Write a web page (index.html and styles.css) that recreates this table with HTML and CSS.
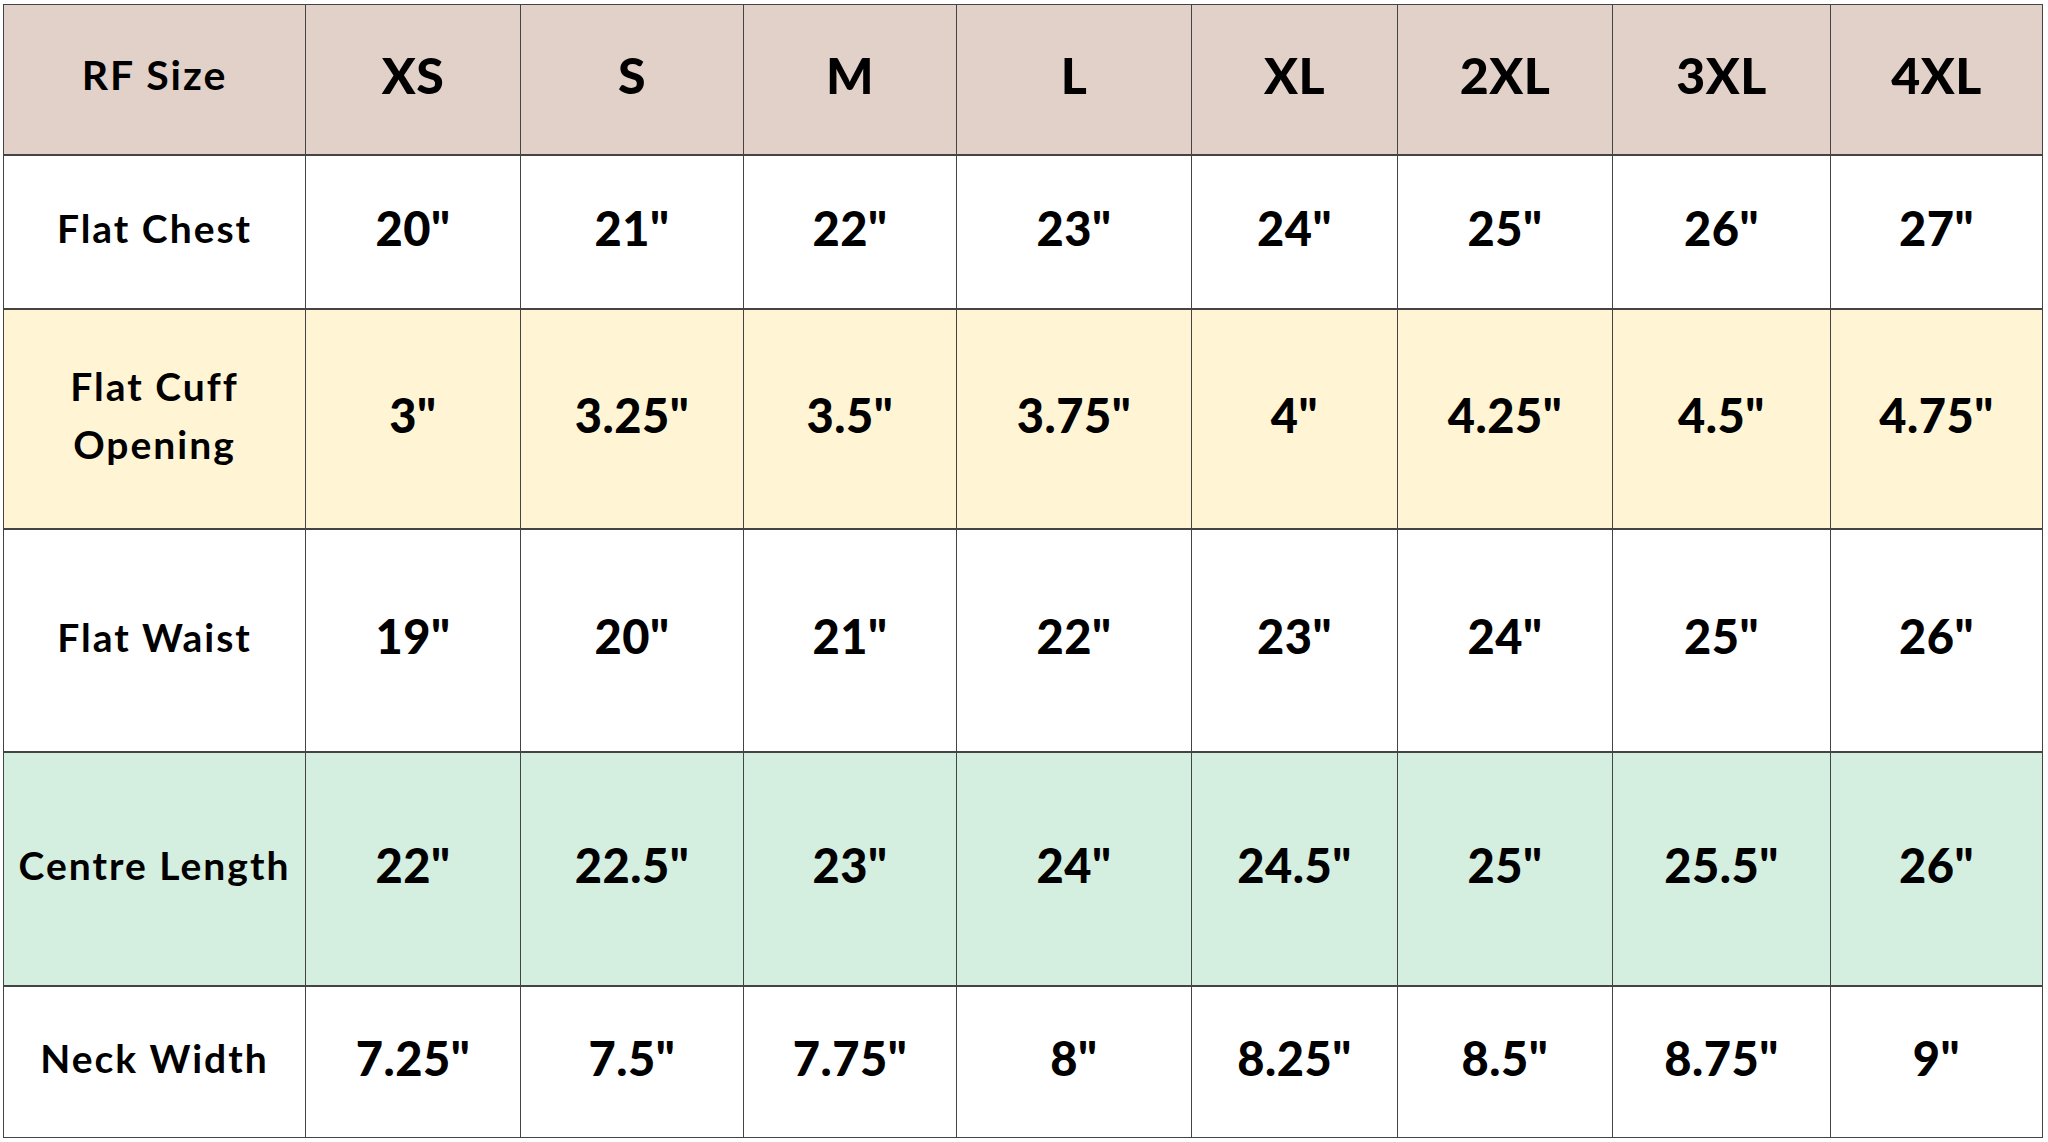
FILE: index.html
```html
<!DOCTYPE html>
<html lang="en">
<head>
<meta charset="utf-8">
<title>RF Size Chart</title>
<link rel="stylesheet" href="styles.css">
</head>
<body>
<div class="chart">
  <div class="cell head label">RF Size</div>
  <div class="cell head">XS</div>
  <div class="cell head">S</div>
  <div class="cell head">M</div>
  <div class="cell head">L</div>
  <div class="cell head">XL</div>
  <div class="cell head">2XL</div>
  <div class="cell head">3XL</div>
  <div class="cell head">4XL</div>

  <div class="cell white label">Flat Chest</div>
  <div class="cell white">20"</div>
  <div class="cell white">21"</div>
  <div class="cell white">22"</div>
  <div class="cell white">23"</div>
  <div class="cell white">24"</div>
  <div class="cell white">25"</div>
  <div class="cell white">26"</div>
  <div class="cell white">27"</div>

  <div class="cell yellow label">Flat Cuff<br>Opening</div>
  <div class="cell yellow">3"</div>
  <div class="cell yellow">3.25"</div>
  <div class="cell yellow">3.5"</div>
  <div class="cell yellow">3.75"</div>
  <div class="cell yellow">4"</div>
  <div class="cell yellow">4.25"</div>
  <div class="cell yellow">4.5"</div>
  <div class="cell yellow">4.75"</div>

  <div class="cell white label">Flat Waist</div>
  <div class="cell white">19"</div>
  <div class="cell white">20"</div>
  <div class="cell white">21"</div>
  <div class="cell white">22"</div>
  <div class="cell white">23"</div>
  <div class="cell white">24"</div>
  <div class="cell white">25"</div>
  <div class="cell white">26"</div>

  <div class="cell green label">Centre Length</div>
  <div class="cell green">22"</div>
  <div class="cell green">22.5"</div>
  <div class="cell green">23"</div>
  <div class="cell green">24"</div>
  <div class="cell green">24.5"</div>
  <div class="cell green">25"</div>
  <div class="cell green">25.5"</div>
  <div class="cell green">26"</div>

  <div class="cell white label">Neck Width</div>
  <div class="cell white">7.25"</div>
  <div class="cell white">7.5"</div>
  <div class="cell white">7.75"</div>
  <div class="cell white">8"</div>
  <div class="cell white">8.25"</div>
  <div class="cell white">8.5"</div>
  <div class="cell white">8.75"</div>
  <div class="cell white">9"</div>
</div>
</body>
</html>
```
FILE: styles.css
```css
html, body {
  margin: 0;
  padding: 0;
  background: #ffffff;
}

body {
  padding: 4px 0 0 3px;
  font-family: Lato, "Liberation Sans", sans-serif;
}

.chart {
  display: inline-grid;
  grid-template-columns: 301px 214px 222px 212px 234px 205px 214px 217px 211px;
  grid-template-rows: 149px 152px 218px 221px 232px 150px;
  column-gap: 1px;
  row-gap: 2px;
  padding: 1px;
  background: #444444;
}

.cell {
  display: flex;
  align-items: center;
  justify-content: center;
  text-align: center;
  color: #000000;
  font-weight: 900;
  font-size: 47px;
  line-height: 1.2;
  letter-spacing: 0.5px;
  padding-bottom: 8px;
}

.cell.label {
  font-size: 39px;
  line-height: 58px;
  letter-spacing: 2px;
  font-weight: 700;
}

.head {
  background: #e2d1c8;
  font-size: 50px;
  padding-bottom: 10px;
}

.head.label {
  font-size: 41px;
  letter-spacing: 2px;
}

.white {
  background: #ffffff;
}

.yellow {
  background: #fff5d5;
}

.green {
  background: #d4eedf;
}
```
